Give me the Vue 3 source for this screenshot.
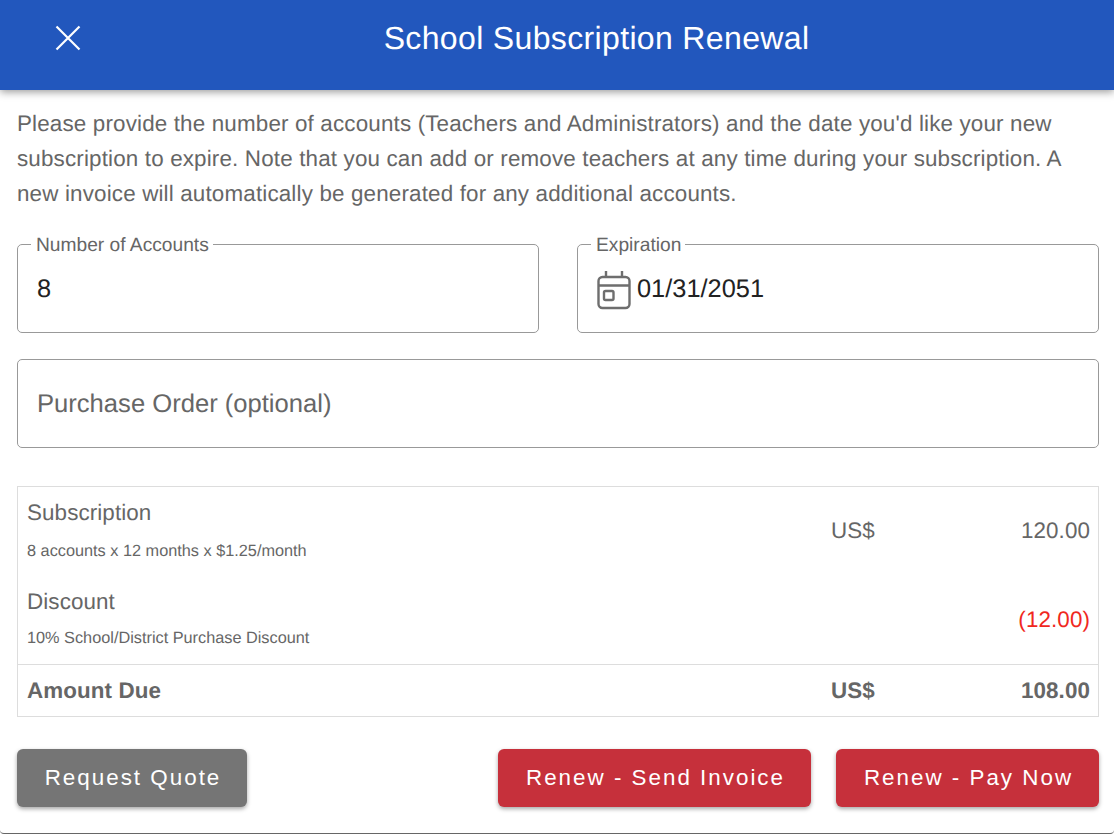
<template>
  <div class="dialog">
    <header class="toolbar">
      <button class="close-btn" aria-label="Close">
        <svg width="26" height="26" viewBox="0 0 26 26" fill="none" stroke="#fff" stroke-width="2.2">
          <path d="M1.5 1.5 L24.5 24.5 M24.5 1.5 L1.5 24.5" />
        </svg>
      </button>
      <h1 class="title">School Subscription Renewal</h1>
    </header>

    <main class="content">
      <p class="intro">
        Please provide the number of accounts (Teachers and Administrators) and the date you'd like your new
        subscription to expire. Note that you can add or remove teachers at any time during your subscription. A
        new invoice will automatically be generated for any additional accounts.
      </p>

      <div class="field-row">
        <fieldset class="field">
          <legend>Number of Accounts</legend>
          <div class="field-value">8</div>
        </fieldset>
        <fieldset class="field">
          <legend>Expiration</legend>
          <div class="field-value with-icon">
            <svg class="cal" width="34" height="40" viewBox="0 0 34 40" fill="none" stroke="#6e6e6e" stroke-width="2.4">
              <rect x="1.5" y="7" width="31" height="31" rx="4" />
              <path d="M1.5 15.5 H32.5 M9 1 V7 M25 1 V7" />
              <rect x="7" y="21" width="9.5" height="9" rx="1.5" />
            </svg>
            <span>01/31/2051</span>
          </div>
        </fieldset>
      </div>

      <div class="field placeholder-field">Purchase Order (optional)</div>

      <div class="summary">
        <div v-for="line in lines" :key="line.name" class="line">
          <div class="line-name">
            <div class="name">{{ line.name }}</div>
            <div class="detail">{{ line.detail }}</div>
          </div>
          <div class="currency">{{ line.currency }}</div>
          <div class="amount" :class="{ negative: line.negative }">{{ line.amount }}</div>
        </div>
        <div class="line total">
          <div class="line-name">Amount Due</div>
          <div class="currency">US$</div>
          <div class="amount">108.00</div>
        </div>
      </div>

      <div class="actions">
        <button class="btn grey">Request Quote</button>
        <div class="actions-right">
          <button class="btn red invoice">Renew - Send Invoice</button>
          <button class="btn red pay">Renew - Pay Now</button>
        </div>
      </div>
    </main>
  </div>
</template>

<script setup>
const lines = [
  { name: 'Subscription', detail: '8 accounts x 12 months x $1.25/month', currency: 'US$', amount: '120.00' },
  { name: 'Discount', detail: '10% School/District Purchase Discount', currency: '', amount: '(12.00)', negative: true }
]
</script>

<style>
html,
body {
  margin: 0;
  background: #fff;
}
</style>

<style scoped>
.dialog {
  width: 1114px;
  height: 834px;
  box-sizing: border-box;
  overflow: hidden;
  border-bottom: 1px solid #666;
  border-radius: 0 0 4px 4px;
  font-family: "Liberation Sans", Arial, sans-serif;
  text-rendering: geometricPrecision;
  color: #666;
  background: #fff;
}

.toolbar {
  height: 90px;
  background: #2257bd;
  box-shadow: 0 2px 8px rgba(0, 0, 0, 0.4);
  display: flex;
  align-items: flex-start;
  color: #fff;
}

.close-btn {
  background: none;
  border: none;
  padding: 0;
  margin: 25px 0 0 55px;
  width: 26px;
  height: 26px;
  display: flex;
}

.title {
  flex: 1;
  margin: 19px 0 0;
  padding-right: 2px;
  text-align: center;
  font-size: 32px;
  line-height: 38px;
  font-weight: 400;
  letter-spacing: 0.35px;
}

.content {
  padding: 0 15px 0 17px;
}

.intro {
  margin: 16px 0 0;
  font-size: 22.4px;
  line-height: 35px;
  letter-spacing: 0.16px;
  width: 1082px;
}

.field-row {
  display: grid;
  grid-template-columns: 522px 522px;
  column-gap: 38px;
  margin-top: 33px;
}

.field {
  box-sizing: border-box;
  border: 1px solid #999;
  border-radius: 5px;
  background: #fff;
}

fieldset.field {
  height: 98px;
  margin: -9px 0 0;
  padding: 0;
  min-width: 0;
}

legend {
  font-size: 19.2px;
  line-height: 18px;
  margin-left: 13px;
  padding: 0 4px 0 5px;
  position: relative;
  top: 2px;
}

.field-value {
  font-size: 25.4px;
  line-height: 28px;
  color: #222;
  margin-top: 22px;
  padding-left: 19px;
  display: flex;
  align-items: center;
}

.with-icon {
  margin-top: 15px;
}

.with-icon span {
  margin-left: 6px;
  position: relative;
  top: 2px;
}

.cal {
  flex: none;
  margin: 2px 0 -4px;
}

.placeholder-field {
  width: 1082px;
  height: 89px;
  margin-top: 26px;
  padding: 2px 0 0 19px;
  display: flex;
  align-items: center;
  font-size: 25.6px;
}

.summary {
  width: 1082px;
  box-sizing: border-box;
  height: 231px;
  margin-top: 38px;
  border: 1px solid #ddd;
  display: flex;
  flex-direction: column;
}

.line {
  display: grid;
  grid-template-columns: 1fr 100px 159px;
  height: 89px;
  padding: 0 8px 0 9px;
  align-items: center;
  font-size: 22.4px;
  letter-spacing: 0.1px;
}

.line:first-child {
  height: 88px;
}

.line-name .name {
  line-height: 26px;
}

.line-name:has(.detail) {
  padding-bottom: 3px;
}

.detail {
  font-size: 16.3px;
  line-height: 18px;
  margin-top: 16px;
  letter-spacing: 0;
}

.line:nth-child(2) .detail {
  margin-top: 14px;
}

.amount {
  text-align: right;
}

.negative {
  color: #f0281e;
}

.line.total {
  height: 52px;
  border-top: 1px solid #ddd;
  box-sizing: border-box;
  font-weight: 700;
}

.actions {
  display: flex;
  justify-content: space-between;
  margin-top: 32px;
  width: 1082px;
}

.actions-right {
  display: flex;
  gap: 25px;
}

.btn {
  height: 58px;
  border: none;
  border-radius: 6px;
  color: #fff;
  font-family: inherit;
  font-size: 22.4px;
  letter-spacing: 2px;
  box-shadow: 0 2px 4px rgba(0, 0, 0, 0.35);
  padding: 0 0 0 2px;
}

.grey {
  width: 230px;
  background: #757575;
}

.red {
  background: #c6303b;
}

.invoice {
  width: 313px;
}

.pay {
  width: 263px;
}
</style>
